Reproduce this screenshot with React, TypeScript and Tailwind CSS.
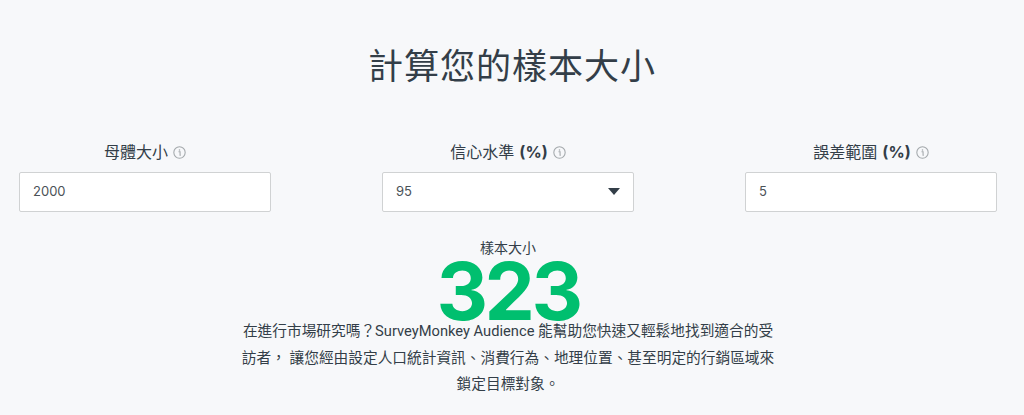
const cjk = '"Inter", "Noto Sans CJK TC", "Noto Sans", sans-serif';
const body = '"Roboto", "Noto Sans CJK TC", sans-serif';

function InfoIcon() {
  return (
    <svg width="13" height="13" viewBox="0 0 16 16" className="ml-[5px] inline-block shrink-0 text-[#a3a8ab]">
      <circle cx="8" cy="8" r="7" fill="none" stroke="currentColor" strokeWidth="1.3" />
      <circle cx="8" cy="4.9" r="0.95" fill="currentColor" />
      <path d="M6.8 7h1.9v4.3h0.9" fill="none" stroke="currentColor" strokeWidth="1.3" />
    </svg>
  );
}

function Field({ label, unit, children }: { label: string; unit?: boolean; children: React.ReactNode }) {
  return (
    <div className="flex w-[252px] flex-col">
      <div className="flex h-6 items-center justify-center text-[16px] text-[#333e48]">
        <span>{label}</span>
        {unit && <span className="ml-[5px] font-bold">(%)</span>}
        <InfoIcon />
      </div>
      <div className="mt-2 flex h-10 items-center justify-between rounded-[2px] border border-[#d0d2d3] bg-white px-[13px] text-[13px] text-[#4b5257]">
        {children}
      </div>
    </div>
  );
}

export default function App() {
  return (
    <main className="h-[415px] w-full overflow-hidden bg-[#f7f8fa]" style={{ fontFamily: cjk }}>
      <h1 className="pt-[42px] text-center text-[35px] leading-[48px] font-normal tracking-[1px] text-[#333e48]">
        計算您的樣本大小
      </h1>

      <section className="mt-[50px] flex gap-[111px] pl-[19px]">
        <Field label="母體大小">
          <span>2000</span>
        </Field>
        <Field label="信心水準" unit>
          <span>95</span>
          <svg width="12" height="8" viewBox="0 0 12 8" className="text-[#333e48]">
            <path d="M0 0h12L6 7z" fill="currentColor" />
          </svg>
        </Field>
        <Field label="誤差範圍" unit>
          <span>5</span>
        </Field>
      </section>

      <section className="mt-[26px] flex flex-col items-center pr-[8px]">
        <p className="text-[14px] leading-5 text-[#333e48]">樣本大小</p>
        <p className="mt-[3px] text-[80px] leading-[60px] font-bold tracking-[-3.5px] text-[#00bf6f]">323</p>
        <p
          className="-mt-[3px] text-center text-[14.7px] leading-[26.5px] whitespace-nowrap text-[#333e48]"
          style={{ fontFamily: body }}
        >
          在進行市場研究嗎？SurveyMonkey Audience 能幫助您快速又輕鬆地找到適合的受
          <br />
          訪者， 讓您經由設定人口統計資訊、消費行為、地理位置、甚至明定的行銷區域來
          <br />
          鎖定目標對象。
        </p>
      </section>
    </main>
  );
}
